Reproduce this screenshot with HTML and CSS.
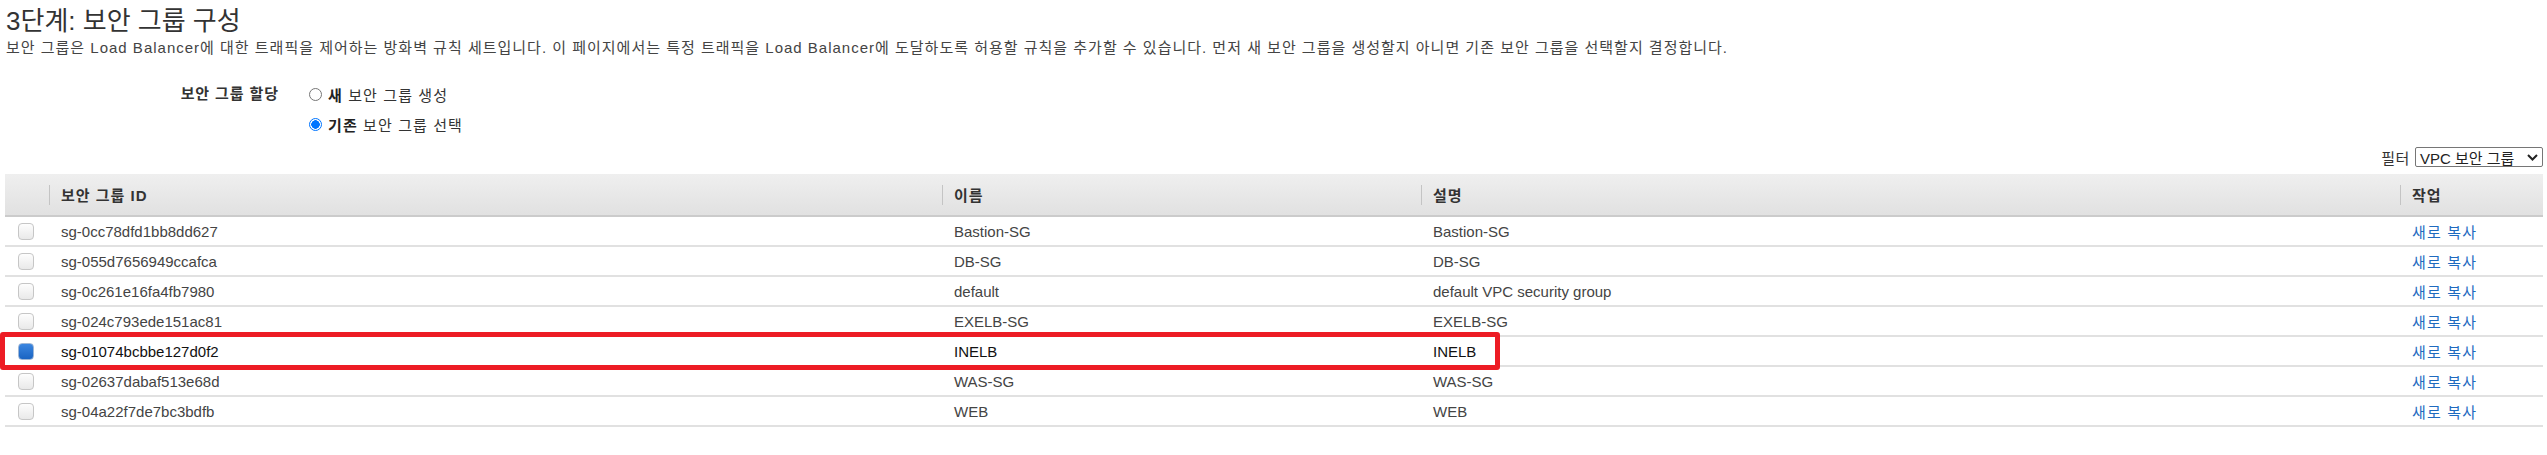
FILE: index.html
```html
<!DOCTYPE html>
<html lang="ko">
<head>
<meta charset="utf-8">
<title>3단계: 보안 그룹 구성</title>
<link rel="stylesheet" href="styles.css">
</head>
<body>
<div class="page">
  <h1 class="title">3단계: 보안 그룹 구성</h1>
  <p class="desc">보안 그룹은 Load Balancer에 대한 트래픽을 제어하는 방화벽 규칙 세트입니다. 이 페이지에서는 특정 트래픽을 Load Balancer에 도달하도록 허용할 규칙을 추가할 수 있습니다. 먼저 새 보안 그룹을 생성할지 아니면 기존 보안 그룹을 선택할지 결정합니다.</p>

  <div class="assign">
    <div class="assign-label">보안 그룹 할당</div>
    <div class="assign-options">
      <div class="option"><span class="radio"></span><span><b>새</b> 보안 그룹 생성</span></div>
      <div class="option"><span class="radio checked"></span><span><b>기존</b> 보안 그룹 선택</span></div>
    </div>
  </div>

  <div class="filter">
    <span class="filter-label">필터</span>
    <div class="select">
      <span class="select-text">VPC 보안 그룹</span>
      <svg class="chev" width="11" height="7" viewBox="0 0 11 7"><path d="M1 1 L5.5 5.5 L10 1" fill="none" stroke="#222" stroke-width="2"/></svg>
    </div>
  </div>

  <div class="grid">
    <div class="hcell"></div>
    <div class="hcell sep">보안 그룹 ID</div>
    <div class="hcell sep">이름</div>
    <div class="hcell sep">설명</div>
    <div class="hcell sep">작업</div>

    <div class="cell"><span class="cb"></span></div>
    <div class="cell">sg-0cc78dfd1bb8dd627</div>
    <div class="cell">Bastion-SG</div>
    <div class="cell">Bastion-SG</div>
    <div class="cell"><a class="link">새로 복사</a></div>

    <div class="cell"><span class="cb"></span></div>
    <div class="cell">sg-055d7656949ccafca</div>
    <div class="cell">DB-SG</div>
    <div class="cell">DB-SG</div>
    <div class="cell"><a class="link">새로 복사</a></div>

    <div class="cell"><span class="cb"></span></div>
    <div class="cell">sg-0c261e16fa4fb7980</div>
    <div class="cell">default</div>
    <div class="cell">default VPC security group</div>
    <div class="cell"><a class="link">새로 복사</a></div>

    <div class="cell"><span class="cb"></span></div>
    <div class="cell">sg-024c793ede151ac81</div>
    <div class="cell">EXELB-SG</div>
    <div class="cell">EXELB-SG</div>
    <div class="cell"><a class="link">새로 복사</a></div>

    <div class="cell sel"><span class="cb checked"></span></div>
    <div class="cell sel">sg-01074bcbbe127d0f2</div>
    <div class="cell sel">INELB</div>
    <div class="cell sel">INELB</div>
    <div class="cell sel"><a class="link">새로 복사</a></div>

    <div class="cell"><span class="cb"></span></div>
    <div class="cell">sg-02637dabaf513e68d</div>
    <div class="cell">WAS-SG</div>
    <div class="cell">WAS-SG</div>
    <div class="cell"><a class="link">새로 복사</a></div>

    <div class="cell"><span class="cb"></span></div>
    <div class="cell">sg-04a22f7de7bc3bdfb</div>
    <div class="cell">WEB</div>
    <div class="cell">WEB</div>
    <div class="cell"><a class="link">새로 복사</a></div>
  </div>

  <div class="highlight"></div>
</div>
</body>
</html>
```

FILE: styles.css
```css
html, body {
  margin: 0;
  padding: 0;
  background: #fff;
}
body {
  font-family: "Liberation Sans", "Noto Sans CJK KR", sans-serif;
  font-size: 15px;
  color: #444;
}
.page {
  position: relative;
  width: 2547px;
  height: 455px;
  overflow: hidden;
}
.title {
  margin: 0;
  padding: 4px 0 0 6px;
  font-size: 26px;
  line-height: 34px;
  font-weight: normal;
  color: #333;
}
.desc {
  margin: 1px 0 0 0;
  padding-left: 6px;
  line-height: 18px;
  color: #444;
  letter-spacing: 1px;
  white-space: nowrap;
}
.assign {
  display: flex;
  margin-top: 22px;
}
.assign-label {
  width: 279px;
  text-align: right;
  line-height: 30px;
  font-weight: bold;
  color: #333;
  letter-spacing: 0.9px;
}
.assign-options {
  margin-left: 30px;
  display: flex;
  flex-direction: column;
}
.option {
  display: flex;
  align-items: center;
  height: 30px;
  gap: 6px;
  color: #333;
  letter-spacing: 1.1px;
}
.option + .option {
  height: 31px;
}
.option b {
  color: #222;
}
.radio {
  width: 11px;
  height: 11px;
  border: 1px solid #767676;
  border-radius: 50%;
  background: #fff;
  flex: none;
}
.radio.checked {
  border-color: #0075ff;
  background: radial-gradient(circle, #0075ff 0 4px, #fff 4.5px);
}
.filter {
  display: flex;
  justify-content: flex-end;
  align-items: center;
  gap: 5px;
  margin-top: 7px;
  padding-right: 4px;
  height: 20px;
  color: #333;
}
.filter-label {
  letter-spacing: 0.6px;
}
.select {
  height: 18px;
  border: 1px solid #767676;
  border-radius: 2px;
  display: flex;
  align-items: center;
  justify-content: space-between;
  padding: 0 4px;
  width: 118px;
  color: #222;
}
.chev {
  flex: none;
}
.grid {
  margin: 7px 4px 0 5px;
  display: grid;
  grid-template-columns: 44px 893px 479px 979px 1fr;
}
.hcell {
  height: 41px;
  background: linear-gradient(#efefef, #e1e1e1);
  border-bottom: 2px solid #cbcbcb;
  display: flex;
  align-items: center;
  padding-left: 12px;
  font-weight: bold;
  color: #333;
  position: relative;
  letter-spacing: 1px;
}
.hcell.sep::before {
  content: "";
  position: absolute;
  left: 0;
  top: 11px;
  height: 20px;
  width: 1px;
  background: #c4c4c4;
}
.cell {
  height: 28px;
  border-bottom: 2px solid #e1e1e1;
  display: flex;
  align-items: center;
  padding-left: 12px;
  color: #444;
}
.cell.sel {
  color: #111;
}
.cb {
  width: 14px;
  height: 15px;
  border: 1px solid #c6c6c6;
  border-radius: 4px;
  background: linear-gradient(#fdfdfd, #e9e9e9);
  margin-left: 1px;
}
.cb.checked {
  border-color: #9fb7d6;
  background: linear-gradient(#3b86e0, #1a64c2);
}
.link {
  color: #1f6bbf;
  text-decoration: none;
  letter-spacing: 1.2px;
}
.highlight {
  position: absolute;
  left: 0;
  top: 332px;
  width: 1490px;
  height: 28px;
  border: 5px solid #ed1c24;
  border-radius: 3px;
}
```
